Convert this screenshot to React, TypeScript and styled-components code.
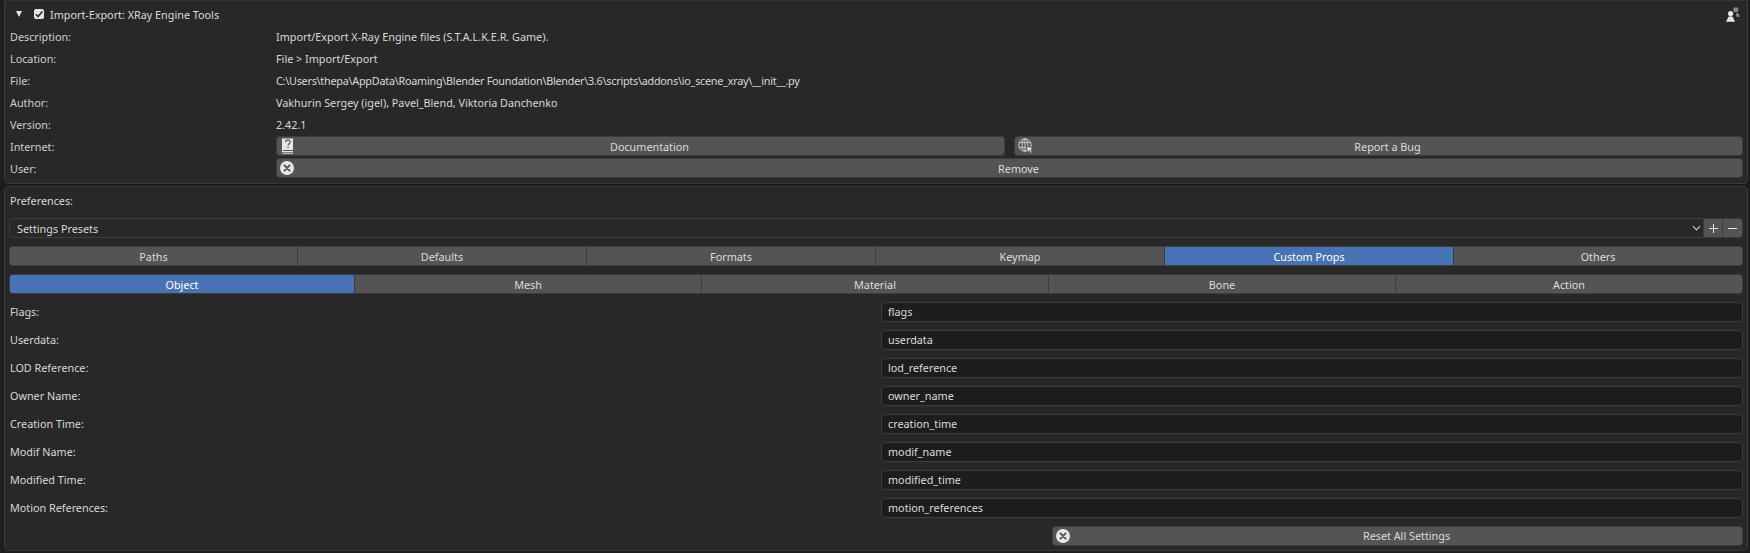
import React from "react";
import styled, { createGlobalStyle } from "styled-components";

const GlobalStyle = createGlobalStyle`
  html, body {
    margin: 0;
    padding: 0;
    width: 1750px;
    height: 553px;
    overflow: hidden;
    background: #1d1d1d;
    color: #d9d9d9;
    font-family: "Noto Sans", "Open Sans", sans-serif;
    font-size: 10.8px;
  }
`;

const INFO = [
  ["Description:", "Import/Export X-Ray Engine files (S.T.A.L.K.E.R. Game)."],
  ["Location:", "File > Import/Export"],
  ["File:", "C:\\Users\\thepa\\AppData\\Roaming\\Blender Foundation\\Blender\\3.6\\scripts\\addons\\io_scene_xray\\__init__.py"],
  ["Author:", "Vakhurin Sergey (igel), Pavel_Blend, Viktoria Danchenko"],
  ["Version:", "2.42.1"],
];

const MAIN_TABS = ["Paths", "Defaults", "Formats", "Keymap", "Custom Props", "Others"];
const SUB_TABS = ["Object", "Mesh", "Material", "Bone", "Action"];

const PROPS = [
  ["Flags:", "flags"],
  ["Userdata:", "userdata"],
  ["LOD Reference:", "lod_reference"],
  ["Owner Name:", "owner_name"],
  ["Creation Time:", "creation_time"],
  ["Modif Name:", "modif_name"],
  ["Modified Time:", "modified_time"],
  ["Motion References:", "motion_references"],
];

function BookIcon() {
  return (
    <IconSvg viewBox="0 0 14 16" width={14} height={16}>
      <path d="M2 0.5h11v11.5H3.5C2.6 12 2 12.4 2 13z" fill="#e6e6e6" />
      <path d="M2 13.2c0-.7.6-1.2 1.5-1.2M2 13.5h11M2.4 15.2H13" stroke="#e6e6e6" strokeWidth="1" fill="none" />
      <path d="M5.6 4.2c0-3 4.6-3 4.6-.2 0 1.7-2.2 1.7-2.2 3.6" stroke="#555" strokeWidth="1.2" fill="none" />
      <rect x="7.4" y="8.8" width="1.3" height="1.3" fill="#555" />
    </IconSvg>
  );
}

function GlobeIcon() {
  return (
    <IconSvg viewBox="0 0 16 16" width={16} height={16}>
      <g stroke="#d6d6d6" strokeWidth="0.9" fill="none">
        <circle cx="7" cy="7" r="6.2" />
        <ellipse cx="7" cy="7" rx="2.8" ry="6.2" />
        <path d="M1 4.6h12M1 9.4h7M7 .8v12" />
      </g>
      <path d="M9 8.2l6 2.6-2.4 1 1.6 2.6-1.2.6-1.5-2.6-1.7 1.8z" fill="#eee" stroke="#555" strokeWidth="0.5" />
    </IconSvg>
  );
}

function RemoveIcon() {
  return (
    <IconSvg viewBox="0 0 14 14" width={14} height={14}>
      <circle cx="7" cy="7" r="7" fill="#e8e8e8" />
      <path d="M4.4 4.4l5.2 5.2M9.6 4.4L4.4 9.6" stroke="#555" strokeWidth="2" strokeLinecap="round" />
    </IconSvg>
  );
}

function UsersIcon() {
  return (
    <svg viewBox="0 0 14 15" width={14} height={15}>
      <circle cx="9.8" cy="2.8" r="2.5" fill="#8c8c8c" />
      <path d="M10 6.2h2.2L14 9.8h-3.6z" fill="#8c8c8c" />
      <circle cx="4.6" cy="6.6" r="2.6" fill="#e6e6e6" />
      <path d="M2.6 9.6h4L9 14.8H0z" fill="#e6e6e6" />
    </svg>
  );
}

export default function App() {
  return (
    <>
      <GlobalStyle />
      <Page>
        <Panel>
          <HeaderRow>
            <Triangle />
            <CheckBox>
              <svg viewBox="0 0 10 10" width={10} height={10}>
                <path d="M1.8 5.2l2.3 2.3 4.2-5" stroke="#2a2a2a" strokeWidth="1.6" fill="none" />
              </svg>
            </CheckBox>
            <HeaderTitle>Import-Export: XRay Engine Tools</HeaderTitle>
            <HeaderIcon>
              <UsersIcon />
            </HeaderIcon>
          </HeaderRow>
          {INFO.map(([label, value]) => (
            <InfoRow key={label}>
              <InfoLabel>{label}</InfoLabel>
              <InfoValue $tight={label === "File:"}>{value}</InfoValue>
            </InfoRow>
          ))}
          <InfoRow>
            <InfoLabel>Internet:</InfoLabel>
            <ButtonPair>
              <ActionButton>
                <BookIcon />
                Documentation
              </ActionButton>
              <ActionButton>
                <GlobeIcon />
                Report a Bug
              </ActionButton>
            </ButtonPair>
          </InfoRow>
          <InfoRow>
            <InfoLabel>User:</InfoLabel>
            <ActionButton>
              <RemoveIcon />
              Remove
            </ActionButton>
          </InfoRow>
        </Panel>

        <PrefsPanel>
          <PrefsTitle>Preferences:</PrefsTitle>
          <PresetRow>
            <PresetSelect>
              Settings Presets
              <svg viewBox="0 0 10 6" width={9} height={6}>
                <path d="M1 1l4 4 4-4" stroke="#c8c8c8" strokeWidth="1.3" fill="none" />
              </svg>
            </PresetSelect>
            <PresetButton>
              <svg viewBox="0 0 11 11" width={11} height={11}>
                <path d="M5.5 1v9M1 5.5h9" stroke="#e6e6e6" strokeWidth="1" />
              </svg>
            </PresetButton>
            <PresetButton $last>
              <svg viewBox="0 0 11 11" width={11} height={11}>
                <path d="M1 5.5h9" stroke="#e6e6e6" strokeWidth="1" />
              </svg>
            </PresetButton>
          </PresetRow>
          <TabRow $firstWidth={287}>
            {MAIN_TABS.map((tab) => (
              <Tab key={tab} $active={tab === "Custom Props"}>{tab}</Tab>
            ))}
          </TabRow>
          <TabRow $firstWidth={344}>
            {SUB_TABS.map((tab) => (
              <Tab key={tab} $active={tab === "Object"}>{tab}</Tab>
            ))}
          </TabRow>
          {PROPS.map(([label, value]) => (
            <PropRow key={value}>
              <PropLabel>{label}</PropLabel>
              <PropField>{value}</PropField>
            </PropRow>
          ))}
          <ResetRow>
            <ResetButton>
              <RemoveIcon />
              Reset All Settings
            </ResetButton>
          </ResetRow>
        </PrefsPanel>
      </Page>
    </>
  );
}

const Page = styled.div`
  display: flex;
  flex-direction: column;
  gap: 2px;
  width: 1750px;
  height: 553px;
  padding: 0 2px 2px 4px;
  box-sizing: border-box;
`;

const Panel = styled.section`
  box-sizing: border-box;
  height: 184px;
  padding: 3px 4px 0 5px;
  background: #282828;
  border: 1px solid #3a3a3a;
  border-top-color: #333;
  border-radius: 0 0 5px 5px;
`;

const HeaderRow = styled.div`
  display: flex;
  align-items: center;
  height: 20px;
  margin-bottom: 1px;
  padding-left: 6px;
`;

const Triangle = styled.span`
  width: 0;
  height: 0;
  border-left: 3.5px solid transparent;
  border-right: 3.5px solid transparent;
  border-top: 6px solid #e6e6e6;
`;

const CheckBox = styled.span`
  display: flex;
  align-items: center;
  justify-content: center;
  width: 10px;
  height: 10px;
  margin-left: 12px;
  background: #e6e6e6;
  border-radius: 2px;
`;

const HeaderTitle = styled.span`
  margin-left: 6px;
  color: #dcdcdc;
`;

const HeaderIcon = styled.span`
  display: flex;
  margin-left: auto;
  margin-right: 3px;
`;

const InfoRow = styled.div`
  display: grid;
  grid-template-columns: 266px 1fr;
  align-items: center;
  height: 22px;
`;

const InfoLabel = styled.span`
  color: #cfcfcf;
`;

const InfoValue = styled.span<{ $tight?: boolean }>`
  letter-spacing: ${({ $tight }) => ($tight ? "-0.24px" : "normal")};
`;

const ButtonPair = styled.div`
  display: grid;
  grid-template-columns: 1fr 1fr;
  gap: 9px;
`;

const IconSvg = styled.svg`
  position: absolute;
  left: 3px;
  top: 50%;
  transform: translateY(-50%);
`;

const ActionButton = styled.button`
  position: relative;
  box-sizing: border-box;
  height: 20px;
  padding: 0 0 0 18px;
  font: inherit;
  color: #dcdcdc;
  text-align: center;
  background: #545454;
  border: 1px solid #3d3d3d;
  border-radius: 4px;
`;

const PrefsPanel = styled.section`
  flex: 1;
  box-sizing: border-box;
  padding: 3px 4px 0 4px;
  background: #282828;
  border: 1px solid #3a3a3a;
  border-radius: 5px;
`;

const PrefsTitle = styled.div`
  display: flex;
  align-items: center;
  height: 20px;
  margin-bottom: 8px;
  padding-left: 1px;
`;

const PresetRow = styled.div`
  display: flex;
  height: 20px;
  margin-bottom: 8px;
`;

const PresetSelect = styled.div`
  flex: 1;
  display: flex;
  align-items: center;
  justify-content: space-between;
  box-sizing: border-box;
  padding: 0 2px 0 7px;
  background: #282828;
  border: 1px solid #3d3d3d;
  border-right: none;
  border-radius: 4px 0 0 4px;
`;

const PresetButton = styled.button<{ $last?: boolean }>`
  display: flex;
  align-items: center;
  justify-content: center;
  box-sizing: border-box;
  width: 20px;
  height: 20px;
  padding: 0;
  background: #545454;
  border: 1px solid #3d3d3d;
  border-left: ${({ $last }) => ($last ? "none" : "1px solid #3d3d3d")};
  border-radius: ${({ $last }) => ($last ? "0 4px 4px 0" : "0")};
`;

const TabRow = styled.div<{ $firstWidth: number }>`
  display: flex;
  height: 20px;
  margin-bottom: 8px;
  background: #545454;
  border: 1px solid #3d3d3d;
  box-sizing: border-box;
  border-radius: 4px;
  overflow: hidden;
  & > :first-child {
    flex: 0 0 ${({ $firstWidth }) => $firstWidth}px;
  }
`;

const Tab = styled.div<{ $active?: boolean }>`
  flex: 1 1 0;
  display: flex;
  align-items: center;
  justify-content: center;
  color: ${({ $active }) => ($active ? "#ffffff" : "#dcdcdc")};
  background: ${({ $active }) => ($active ? "#4772b3" : "#545454")};
  & + & {
    border-left: 1px solid #3d3d3d;
  }
`;

const PropRow = styled.div`
  display: grid;
  grid-template-columns: 871px 1fr;
  align-items: center;
  height: 20px;
  margin-bottom: 8px;
  padding-left: 1px;
`;

const PropLabel = styled.span`
  padding-bottom: 1px;
`;

const PropField = styled.div`
  display: flex;
  align-items: center;
  box-sizing: border-box;
  height: 20px;
  padding: 0 0 1px 6px;
  color: #dcdcdc;
  background: #1d1d1d;
  border: 1px solid #3d3d3d;
  border-radius: 4px;
`;

const ResetRow = styled.div`
  display: flex;
  justify-content: flex-end;
`;

const ResetButton = styled(ActionButton)`
  width: 691px;
  padding-bottom: 1px;
`;
